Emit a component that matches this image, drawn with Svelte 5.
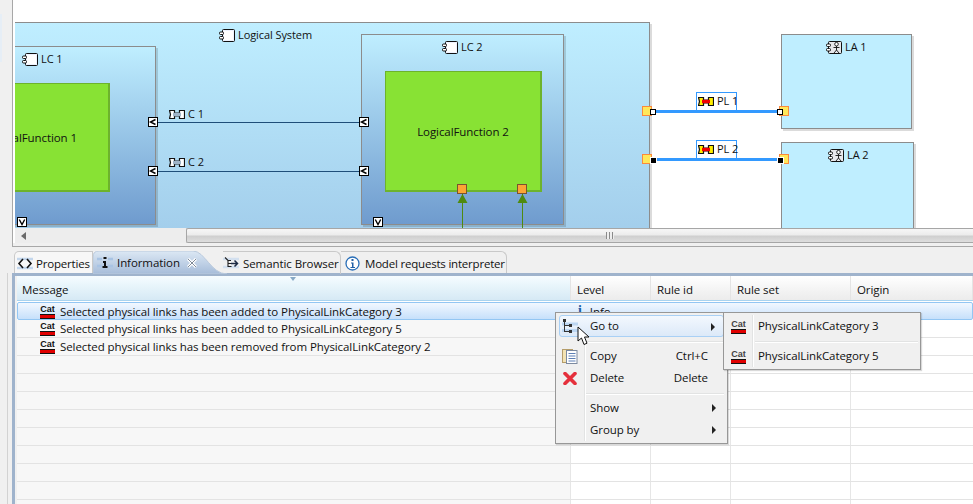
<script>
  const columns = ['Level', 'Rule id', 'Rule set', 'Origin'];
  const messages = [
    'Selected physical links has been added to PhysicalLinkCategory 3',
    'Selected physical links has been added to PhysicalLinkCategory 5',
    'Selected physical links has been removed from PhysicalLinkCategory 2'
  ];
  const rows = Array.from({ length: 12 }, (_, i) => ({ message: messages[i] ?? '', selected: i === 0 }));
</script>

{#snippet compIcon()}
  <svg class="ic" width="16" height="13" viewBox="0 0 16 13">
    <rect x="3.500" y="0.500" width="12" height="12" rx="1" fill="#eef3ff" stroke="#111" />
    <rect x="5" y="2" width="9" height="9" fill="#fff" />
    <rect x="0.500" y="3" width="4" height="2.500" rx="1" fill="#fff" stroke="#111" />
    <rect x="0.500" y="7.500" width="4" height="2.500" rx="1" fill="#fff" stroke="#111" />
  </svg>
{/snippet}

{#snippet actorIcon()}
  <svg class="ic" width="16" height="13" viewBox="0 0 16 13">
    <rect x="2.500" y="0.500" width="13" height="12" rx="1" fill="#e8e8ec" stroke="#111" />
    <rect x="0.500" y="3" width="4" height="2.500" rx="1" fill="#fff" stroke="#111" />
    <rect x="0.500" y="7.500" width="4" height="2.500" rx="1" fill="#fff" stroke="#111" />
    <circle cx="10.500" cy="3.200" r="1.800" fill="#fff" stroke="#111" stroke-width="0.900" />
    <path d="M10.500 5v4M7.500 6.500h6M10.500 9l-2.500 3M10.500 9l2.500 3" fill="none" stroke="#111" stroke-width="0.900" />
  </svg>
{/snippet}

{#snippet linkIcon(fill, mid)}
  <svg class="ic" width="16" height="9" viewBox="0 0 16 9">
    <path d="M0.500 0.500h5v2.500h5v-2.500h5v8h-5v-2.500h-5v2.500h-5l1-4z" fill={fill} stroke="#111" stroke-width="1.200" />
    <rect x="4" y="2.800" width="8" height="3.400" fill={mid} />
  </svg>
{/snippet}

{#snippet catIcon()}
  <span class="cat"><span class="cat-text">Cat</span></span>
{/snippet}

{#snippet chevronBox(kind, cls)}
  <svg class="box {cls}" width="10" height="10" viewBox="0 0 10 10">
    <rect x="0.500" y="0.500" width="9" height="9" fill="#fff" stroke="#000" />
    {#if kind === 'left'}
      <path d="M7.500 2.500L2.500 5l5 2.500" fill="none" stroke="#000" stroke-width="1.400" />
    {:else}
      <path d="M2.300 2.500L5 7.500l2.700-5" fill="none" stroke="#000" stroke-width="1.400" />
    {/if}
  </svg>
{/snippet}

<div class="app">
  <section class="top">
    <div class="side"></div>
    <div class="editor">
      <div class="canvas">
        <div class="node ls"></div>
        <div class="label l-ls">{@render compIcon()}<span>Logical System</span></div>

        <div class="node lc lc1"></div>
        <div class="label l-lc1">{@render compIcon()}<span>LC 1</span></div>
        <div class="fn fn1"><span class="fn1-text">LogicalFunction 1</span></div>

        <div class="node lc lc2"></div>
        <div class="label l-lc2">{@render compIcon()}<span>LC 2</span></div>
        <div class="fn fn2"><span>LogicalFunction 2</span></div>

        <div class="node la la1"></div>
        <div class="label l-la1">{@render actorIcon()}<span>LA 1</span></div>
        <div class="node la la2"></div>
        <div class="label l-la2">{@render actorIcon()}<span>LA 2</span></div>

        <svg class="edges" width="958" height="228" viewBox="0 0 958 228">
          <path d="M142 122.500H344M142 171.500H344" stroke="#1f4e79" fill="none" />
          <path d="M447.500 194V228M507.500 194V228" stroke="#4f8a10" fill="none" />
          <path d="M447.500 194l5 9h-10zM507.500 194l5 9h-10z" fill="#4f8a10" />
          <path d="M640 111.500H763M640 159.500H763" stroke="#3399ff" stroke-width="3" fill="none" />
        </svg>

        <div class="label l-c1">{@render linkIcon('#fff', '#9fb4c8')}<span>C 1</span></div>
        <div class="label l-c2">{@render linkIcon('#fff', '#9fb4c8')}<span>C 2</span></div>

        <div class="pl pl1">{@render linkIcon('#ffee00', '#f00000')}<span>PL 1</span></div>
        <div class="pl pl2">{@render linkIcon('#ffee00', '#f00000')}<span>PL 2</span></div>

        {@render chevronBox('left', 'b1')}
        {@render chevronBox('left', 'b2')}
        {@render chevronBox('left', 'b3')}
        {@render chevronBox('left', 'b4')}
        {@render chevronBox('down', 'b5')}
        {@render chevronBox('down', 'b6')}

        <div class="fport fp1"></div>
        <div class="fport fp2"></div>
        <div class="port p1"></div>
        <div class="port p2"></div>
        <div class="port p3"></div>
        <div class="port p4"></div>
        <div class="end white e1"></div>
        <div class="end white e2"></div>
        <div class="end black e3"></div>
        <div class="end black e4"></div>
      </div>
      <div class="hscroll">
        <div class="track">
          <svg width="6" height="8" viewBox="0 0 6 8" class="arrow"><path d="M5 0v8L0 4z" fill="#6a6a6a" /></svg>
        </div>
        <div class="thumb"><span class="grip"></span></div>
      </div>
    </div>
  </section>

  <section class="bottom">
    <div class="tabs">
      <div class="tab t-prop">
        <svg class="tab-ic" width="16" height="13" viewBox="0 0 16 13">
          <path d="M0 2h16M0 11h16" stroke="#c3d6ec" stroke-width="2.500" />
          <path d="M6 2L2 6.500l4 4.500M10 2l4 4.500-4 4.500" fill="none" stroke="#111" stroke-width="1.600" />
        </svg>
        <span>Properties</span>
      </div>
      <div class="tab t-info">
        <svg class="t-info-bg" width="134" height="23" viewBox="0 0 134 23">
          <defs>
            <linearGradient id="act" x1="0" y1="0" x2="0" y2="1">
              <stop offset="0" stop-color="#dce8f4" />
              <stop offset="1" stop-color="#a6bcd9" />
            </linearGradient>
          </defs>
          <path d="M0 23V6Q0 0 6 0H100C112 0 118 23 134 23Z" fill="url(#act)" stroke="#b9c9dc" />
        </svg>
        <svg class="tab-ic" width="16" height="13" viewBox="0 0 16 13">
          <path d="M0 3h5M0 10h5M11 3h5M11 10h5" stroke="#a9c4e4" stroke-width="2.500" />
          <path d="M6.500 1h3v2h-3zM6 5h3v5h1.500v2h-5v-2H7V7H6z" fill="#111" />
        </svg>
        <span class="t-info-text">Information</span>
        <svg class="tab-x" width="10" height="10" viewBox="0 0 10 10"><path d="M1 1l8 8M9 1l-8 8" stroke="#fff" stroke-width="3" /><path d="M1 1l8 8M9 1l-8 8" stroke="#7f8b99" stroke-width="1" /></svg>
      </div>
      <div class="tab t-sem">
        <svg class="tab-ic" width="16" height="14" viewBox="0 0 16 14">
          <path d="M0 3h16M0 11h16" stroke="#d3e0ef" stroke-width="2.500" />
          <path d="M2 1.500l3 3H8M5 4.500v6H8.500M5 7.500H8" fill="none" stroke="#222" stroke-width="1.100" />
          <path d="M8 7.500h6M11.500 4.500l3 3-3 3" fill="none" stroke="#1c2a44" stroke-width="1.500" />
        </svg>
        <span>Semantic Browser</span>
      </div>
      <div class="tab t-model">
        <svg class="tab-ic" width="15" height="15" viewBox="0 0 15 15"><circle cx="7.500" cy="7.500" r="6.500" fill="#fff" stroke="#2a6fb8" stroke-width="1.300" /><path d="M6.500 3h2v2h-2zM6 6.500h2.500V11H10v1H5.500v-1H7V7.500H6z" fill="#1f5fa6" /></svg>
        <span>Model requests interpreter</span>
      </div>
    </div>

    <div class="panel">
      <div class="panel-side"></div>
      <div class="panel-frame"></div>
      <div class="table">
        <div class="thead">
          <div class="th th-msg">Message<i class="sort"></i></div>
          {#each columns as c}
            <div class="th th-col">{c}</div>
          {/each}
        </div>
        {#each rows as row}
          <div class="tr" class:selected={row.selected}>
            <div class="td td-msg">
              {#if row.message}
                {@render catIcon()}
                <span>{row.message}</span>
              {/if}
            </div>
            <div class="td td-level">
              {#if row.selected}<b class="info-i">i</b><span>Info</span>{/if}
            </div>
            <div class="td"></div>
            <div class="td"></div>
            <div class="td last"></div>
          </div>
        {/each}
      </div>
    </div>
  </section>

  <div class="menu main-menu">
    <div class="gutter"></div>
    <div class="mi hover">
      <svg class="mi-ic ic-tree" width="16" height="15" viewBox="0 0 16 15">
        <path d="M0 5h16M0 11.500h16" stroke="#bcd6f2" stroke-width="3" />
        <path d="M2.500 3v10M2.500 6.500h5M2.500 12.500h5" stroke="#333" fill="none" />
        <rect x="1" y="0" width="3" height="3" fill="#333" />
        <rect x="7" y="5" width="3" height="3" fill="#333" />
        <rect x="7" y="11" width="3" height="3" fill="#333" />
      </svg>
      <span class="mi-label">Go to</span><i class="caret"></i>
    </div>
    <div class="msep"></div>
    <div class="mi">
      <svg class="mi-ic ic-copy" width="16" height="15" viewBox="0 0 16 15">
        <rect x="0.500" y="0.500" width="10" height="13" fill="#f3e3b4" stroke="#b59d6a" />
        <rect x="4.500" y="1.500" width="10.500" height="13" fill="#fff" stroke="#7c8aa0" />
        <path d="M6.500 4.500h7M6.500 7h7M6.500 9.500h7M6.500 12h7" stroke="#5d7fb5" />
      </svg>
      <span class="mi-label">Copy</span><span class="key">Ctrl+C</span>
    </div>
    <div class="mi">
      <svg class="mi-ic ic-del" width="14" height="13" viewBox="0 0 14 13">
        <path d="M2 1.500L12 11.500M12 1.500L2 11.500" stroke="#e5303c" stroke-width="3.600" stroke-linecap="round" />
      </svg>
      <span class="mi-label">Delete</span><span class="key">Delete</span>
    </div>
    <div class="msep"></div>
    <div class="mi"><span class="mi-label">Show</span><i class="caret"></i></div>
    <div class="mi"><span class="mi-label">Group by</span><i class="caret"></i></div>
  </div>

  <div class="menu sub-menu">
    <div class="sub-gutter"></div>
    <div class="si">{@render catIcon()}<span>PhysicalLinkCategory 3</span></div>
    <div class="msep ssep"></div>
    <div class="si">{@render catIcon()}<span>PhysicalLinkCategory 5</span></div>
  </div>

  <svg class="cursor" width="14" height="20" viewBox="0 0 14 20">
    <path d="M1 1V15L4.500 12L7 18.500L10 17.200L7.500 11H12Z" fill="#fff" stroke="#111" stroke-linejoin="round" />
  </svg>
</div>

<style>
  :global(body) {
    margin: 0;
    background: #f0f0f0;
  }
  .app {
    position: relative;
    width: 973px;
    height: 504px;
    overflow: hidden;
    display: flex;
    flex-direction: column;
    font-family: "Open Sans", "Noto Sans", sans-serif;
    font-size: 11.5px;
    letter-spacing: -0.08px;
    color: #111;
    background: #f0f0f0;
  }

  /* upper pane */
  .top {
    display: flex;
    height: 247px;
    flex: none;
  }
  .side {
    width: 12px;
    flex: none;
    border-right: 1px solid #a8a8a8;
    background: linear-gradient(#e6eef6, #e6eef6) 0 14px / 2px 48px no-repeat;
  }
  .editor {
    flex: 1;
    min-width: 0;
    display: flex;
    flex-direction: column;
    box-sizing: border-box;
    padding-left: 2px;
    border-bottom: 1px solid #a8a8a8;
    background: linear-gradient(#fff 243px, #f0f0f0 243px);
  }
  .canvas {
    position: relative;
    height: 228px;
    flex: none;
    overflow: hidden;
    background: #fff;
  }
  .hscroll {
    height: 15px;
    flex: none;
    display: flex;
    background: #ededed;
  }
  .track {
    width: 171px;
    flex: none;
    display: flex;
    align-items: center;
    padding-left: 6px;
    box-sizing: border-box;
  }
  .thumb {
    flex: 1;
    display: flex;
    align-items: center;
    justify-content: center;
    padding-left: 60px;
    border: 1px solid #a6a6a6;
    border-right: none;
    border-radius: 2px 0 0 2px;
    box-sizing: border-box;
    background: linear-gradient(#f6f6f6, #ececec 45%, #cfcfcf 55%, #dedede);
  }
  .grip {
    width: 8px;
    height: 7px;
    background: repeating-linear-gradient(90deg, #8a8a8a 0 1px, #eee 1px 3px);
  }

  /* diagram canvas: coordinates are the content */
  .node {
    position: absolute;
    box-sizing: border-box;
    border: 1px solid #8c8c8c;
    box-shadow: 2px 2px 0 rgba(0, 0, 0, 0.14);
  }
  .ls {
    left: -5px;
    top: 22px;
    width: 640px;
    height: 216px;
    background: linear-gradient(#bfeeff, #a2cdeb);
  }
  .lc {
    background: linear-gradient(#bfeeff, #6f9bce);
  }
  .lc1 {
    left: -5px;
    top: 46px;
    width: 146px;
    height: 179px;
  }
  .lc2 {
    left: 346px;
    top: 34px;
    width: 203px;
    height: 191px;
  }
  .la {
    background: #bfeeff;
  }
  .la1 {
    left: 766px;
    top: 34px;
    width: 131px;
    height: 95px;
  }
  .la2 {
    left: 766px;
    top: 142px;
    width: 133px;
    height: 110px;
  }
  .fn {
    position: absolute;
    box-sizing: border-box;
    display: flex;
    align-items: center;
    justify-content: center;
    background: #88e234;
    border: 1px solid #6db32c;
    border-right-width: 2px;
    border-bottom-width: 2px;
  }
  .fn1 {
    left: -5px;
    top: 83px;
    width: 100px;
    height: 109px;
    justify-content: flex-end;
    padding-right: 31px;
    overflow: hidden;
  }
  .fn1-text {
    white-space: nowrap;
    flex: none;
    margin-left: -100px;
  }
  .fn2 {
    left: 370px;
    top: 71px;
    width: 157px;
    height: 121px;
  }
  .label {
    position: absolute;
    display: flex;
    align-items: center;
    gap: 3px;
    height: 14px;
    white-space: nowrap;
    font-size: 11px;
  }
  .label span, .pl span {
    padding-bottom: 2px;
  }
  .l-ls { left: 204px; top: 28px; }
  .l-lc1 { left: 7px; top: 52px; }
  .l-lc2 { left: 427px; top: 40px; }
  .l-la1 { left: 811px; top: 40px; }
  .l-la2 { left: 813px; top: 148px; }
  .l-c1 { left: 154px; top: 107px; }
  .l-c2 { left: 154px; top: 155px; }
  .ic {
    flex: none;
    display: block;
  }
  .edges {
    position: absolute;
    left: 0;
    top: 0;
  }
  .pl {
    position: absolute;
    left: 681px;
    width: 41px;
    height: 18px;
    box-sizing: border-box;
    display: flex;
    align-items: center;
    gap: 3px;
    padding-left: 1px;
    background: #fff;
    border: 1px solid #3399ff;
    border-bottom: none;
    white-space: nowrap;
    font-size: 11px;
  }
  .pl1 { top: 92px; }
  .pl2 { top: 140px; }
  .box {
    position: absolute;
    display: block;
  }
  .b1 { left: 133px; top: 117px; }
  .b2 { left: 133px; top: 166px; }
  .b3 { left: 344px; top: 117px; }
  .b4 { left: 344px; top: 166px; }
  .b5 { left: 2px; top: 217px; }
  .b6 { left: 358px; top: 217px; }
  .fport {
    position: absolute;
    top: 184px;
    width: 10px;
    height: 10px;
    box-sizing: border-box;
    background: #fba534;
    border: 1px solid #7a5230;
  }
  .fp1 { left: 442px; }
  .fp2 { left: 502px; }
  .port {
    position: absolute;
    width: 10px;
    height: 10px;
    box-sizing: border-box;
    background: #ffe85a;
    border: 1px solid #fb8a3c;
  }
  .p1 { left: 627px; top: 106px; }
  .p2 { left: 627px; top: 154px; }
  .p3 { left: 764px; top: 106px; }
  .p4 { left: 764px; top: 154px; }
  .end {
    position: absolute;
    width: 6px;
    height: 6px;
    box-sizing: border-box;
    border: 1px solid #000;
  }
  .white { background: #fff; }
  .black {
    background: #000;
    box-shadow: 0 0 0 1px #fff;
  }
  .e1 { left: 635px; top: 109px; }
  .e2 { left: 762px; top: 109px; }
  .e3 { left: 636px; top: 158px; width: 5px; height: 5px; }
  .e4 { left: 763px; top: 158px; width: 5px; height: 5px; }

  /* lower pane */
  .bottom {
    flex: 1;
    min-height: 0;
    display: flex;
    flex-direction: column;
    padding-top: 4px;
  }
  .tabs {
    height: 22px;
    flex: none;
    display: flex;
    padding-left: 14px;
    position: relative;
  }
  .tab {
    position: relative;
    display: flex;
    align-items: center;
    gap: 3px;
    box-sizing: border-box;
    height: 23px;
    background: #f7f7f7;
    border: 1px solid #c9c9c9;
    border-bottom: none;
    white-space: nowrap;
  }
  .tab-ic {
    flex: none;
    position: relative;
  }
  .t-prop {
    width: 79px;
    padding-left: 2px;
    border-radius: 5px 0 0 0;
    letter-spacing: -0.2px;
  }
  .t-info {
    width: 130px;
    padding-left: 4px;
    background: transparent;
    border: none;
    gap: 4px;
    z-index: 1;
  }
  .t-info-bg {
    position: absolute;
    left: 0;
    top: 0;
  }
  .t-info-text, .tab-x {
    position: relative;
  }
  .tab-x {
    margin-left: 3px;
    flex: none;
  }
  .t-sem {
    width: 118px;
    padding-left: 0;
    gap: 4px;
    border-left: none;
    border-radius: 0 6px 0 0;
    z-index: 2;
    background: transparent;
  }
  .t-model {
    width: 166px;
    padding-left: 4px;
    border-left: none;
    border-radius: 0 6px 0 0;
    gap: 5px;
    letter-spacing: -0.2px;
    background: #f0f0f0;
  }
  .panel {
    flex: 1;
    min-height: 0;
    display: flex;
    position: relative;
    border-top: 3px solid #9fb3cc;
    margin-left: 12px;
  }
  .panel-side {
    position: absolute;
    left: -5px;
    top: -3px;
    bottom: 0;
    width: 1px;
    background: #d2d2d2;
  }
  .panel-frame {
    width: 3px;
    flex: none;
    background: #9fb3cc;
  }
  .table {
    flex: 1;
    min-width: 0;
    margin-left: 2px;
    background: #fff;
    overflow: hidden;
  }
  .thead, .tr {
    display: grid;
    grid-template-columns: 554px 80px 80px 120px 1fr;
  }
  .thead {
    height: 25px;
    box-sizing: border-box;
    border-bottom: 1px solid #a9d3ef;
  }
  .th {
    position: relative;
    display: flex;
    align-items: center;
    padding: 3px 0 0 5px;
    background: linear-gradient(#fff, #f6f6f6 45%, #ececec);
    border-right: 1px solid #e4e4e4;
  }
  .th-col {
    padding-left: 6px;
  }
  .th-msg {
    background: linear-gradient(#f6fcff, #e8f5fb 40%, #d6e9f5);
  }
  .sort {
    position: absolute;
    left: 273px;
    top: 1px;
    border: 3.500px solid transparent;
    border-top: 4px solid #88a9c6;
    border-bottom: none;
  }
  .tr {
    height: 18px;
    box-sizing: border-box;
    border-bottom: 1px solid #e3e3e3;
  }
  .td {
    display: flex;
    align-items: center;
    min-width: 0;
    border-right: 1px solid #e6e6e6;
    white-space: nowrap;
    gap: 5px;
  }
  .td.last {
    border-right: none;
  }
  .td-msg {
    background: #f7f7f7;
    padding-left: 23px;
  }
  .td-level {
    padding-left: 6px;
    gap: 8px;
  }
  .info-i {
    font-family: "Liberation Serif", serif;
    font-size: 14px;
    color: #1f5fa6;
  }
  .tr.selected {
    border: 1px solid #93c6f3;
    border-radius: 2px;
    background: linear-gradient(#f2f8ff, #c6e0fb);
    margin-top: 1px;
  }
  .tr.selected .td {
    background: transparent;
    border-right-color: transparent;
  }
  .tr.selected .td-msg {
    padding-left: 22px;
  }
  .cat {
    display: inline-flex;
    justify-content: center;
    flex: none;
    width: 15px;
    height: 13px;
    box-sizing: border-box;
    border-bottom: 3px solid #e00000;
    box-shadow: 0 1px 0 #111;
  }
  .cat-text {
    display: block;
    width: 100%;
    height: 10px;
    text-align: center;
    box-sizing: border-box;
    border-bottom: 1px solid #111;
    font-family: "Liberation Sans", sans-serif;
    font-size: 9px;
    font-weight: 700;
    line-height: 8px;
    letter-spacing: 0;
    color: #111;
  }

  /* context menus overlay the page */
  .menu {
    position: absolute;
    box-sizing: border-box;
    background: #f0f0f0;
    border: 1px solid #979797;
    box-shadow: 1px 1px 1px rgba(0, 0, 0, 0.15);
  }
  .main-menu {
    left: 555px;
    top: 312px;
    width: 173px;
    height: 132px;
    padding: 2px 3px;
    display: flex;
    flex-direction: column;
  }
  .gutter, .sub-gutter {
    position: absolute;
    left: 28px;
    top: 2px;
    bottom: 2px;
    width: 1px;
    background: #e2e3e3;
    box-shadow: 1px 0 0 #fff;
  }
  .mi {
    position: relative;
    flex: none;
    height: 22px;
    display: flex;
    align-items: center;
    box-sizing: border-box;
    padding-left: 31px;
    white-space: nowrap;
  }
  .mi-label, .key, .si span:last-child {
    padding-bottom: 2px;
  }
  .mi-ic {
    position: absolute;
    left: 3px;
  }
  .ic-tree { top: 3px; left: 2px; }
  .ic-copy { top: 4px; }
  .ic-del { top: 5px; left: 4px; }
  .hover {
    border: 1px solid #a9d0f5;
    border-radius: 3px;
    background: linear-gradient(#f3f8fe, #dce9f8);
    padding-left: 30px;
  }
  .msep {
    flex: none;
    height: 1px;
    margin: 4px 0 3px 27px;
    background: #e2e3e3;
    box-shadow: 0 1px 0 #fff;
  }
  .mi-label { flex: none; }
  .key {
    margin-left: auto;
    margin-right: 16px;
  }
  .caret {
    position: absolute;
    right: 8px;
    top: 7px;
    border: 4px solid transparent;
    border-left: 4px solid #222;
    border-right: none;
  }
  .sub-menu {
    left: 723px;
    top: 312px;
    width: 198px;
    height: 58px;
    padding: 2px;
    display: flex;
    flex-direction: column;
  }
  .si {
    flex: none;
    height: 22px;
    display: flex;
    align-items: center;
    gap: 12px;
    padding-left: 5px;
    white-space: nowrap;
  }
  .ssep {
    margin-left: 29px;
  }
  .sub-menu .cat-text { color: #444; }
  .cursor {
    position: absolute;
    left: 577px;
    top: 326px;
  }
</style>
